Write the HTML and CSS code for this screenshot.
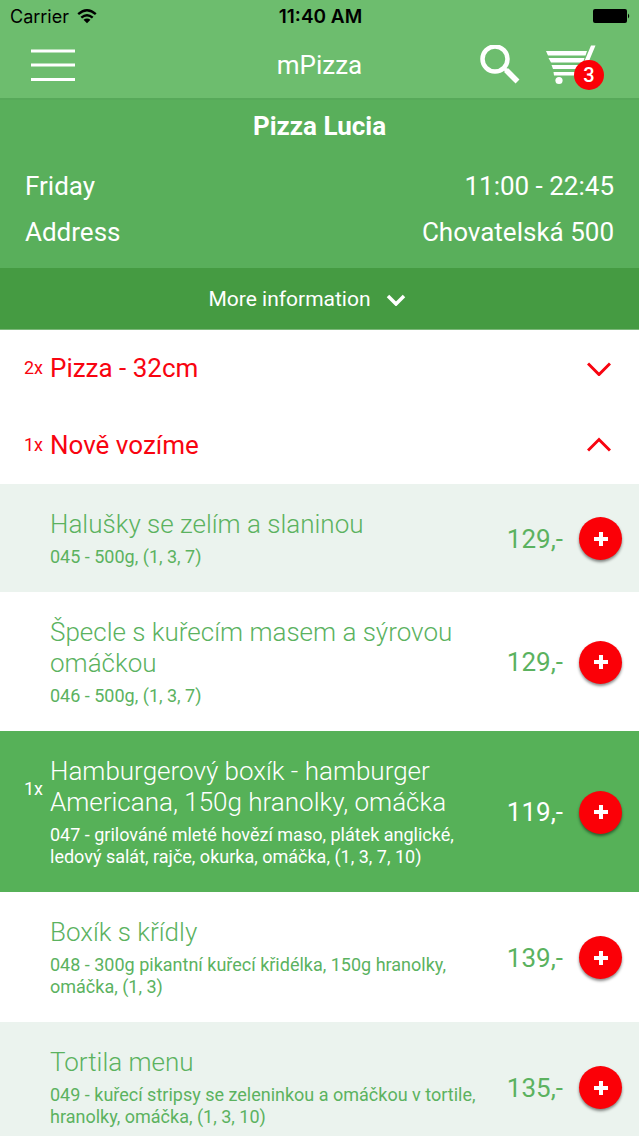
FILE: index.html
```html
<!DOCTYPE html>
<html lang="cs">
<head>
<meta charset="utf-8">
<meta name="viewport" content="width=device-width, initial-scale=1">
<title>mPizza</title>
<link rel="stylesheet" href="styles.css">
</head>
<body>
<div class="app">
  <header class="topbar">
    <div class="status">
      <span class="carrier">Carrier
        <svg width="20" height="15" viewBox="0 0 20 15" fill="none" stroke="#000" stroke-width="2.4" aria-hidden="true"><path d="M1.2 5.2Q10-2.6 18.8 5.2M4.3 8.7Q10 3.7 15.7 8.7"/><path d="M6.5 10.8Q10 8 13.5 10.8L10 14.3Z" fill="#000" stroke="none"/></svg>
      </span>
      <span class="clock">11:40 AM</span>
      <svg class="battery" width="38" height="16" viewBox="0 0 38 16" aria-hidden="true"><rect x="0" y="1" width="34" height="14" rx="2"/><path d="M35 5.500q2.500 2.500 0 5z"/></svg>
    </div>
    <nav class="nav">
      <button class="icon-button" aria-label="Menu">
        <svg width="44" height="34" viewBox="0 0 44 34" stroke="#fff" stroke-width="3"><path d="M0 3h44M0 17h44M0 31.500h44"/></svg>
      </button>
      <h1 class="app-title">mPizza</h1>
      <div class="actions">
        <button class="icon-button" aria-label="Search">
          <svg width="40" height="40" viewBox="0 0 40 40" fill="none" stroke="#fff"><circle cx="15" cy="14" r="12.500" stroke-width="4.500"/><path d="M24 23l2.500 2.500" stroke-width="3.500"/><path d="M26 25L37.500 36.500" stroke-width="5.500"/></svg>
        </button>
        <button class="icon-button cart" aria-label="Cart">
          <svg width="51" height="40" viewBox="0 0 51 40" fill="#fff"><path d="M0 6h41l-1.500 4.500H2zM2.500 13h36l-1.500 4.500H5zM5.500 20h31L35 24H7zM7.500 27h27v3.500H8zM45 .5h4.500L40.500 22h-4.500z"/><circle cx="13" cy="35.500" r="3.600"/></svg>
          <span class="badge">3</span>
        </button>
      </div>
    </nav>
  </header>

  <section class="restaurant">
    <h2 class="restaurant-name">Pizza Lucia</h2>
    <dl class="facts">
      <div class="fact"><dt>Friday</dt><dd>11:00 - 22:45</dd></div>
      <div class="fact"><dt>Address</dt><dd>Chovatelská 500</dd></div>
    </dl>
  </section>
  <button class="more">More information
    <svg width="20" height="14" viewBox="0 0 20 14" fill="none" stroke="#fff" stroke-width="3.500" aria-hidden="true"><path d="M2 4l8 8 8-8"/></svg>
  </button>

  <main class="menu">
    <button class="category" aria-expanded="false">
      <span class="count">2x</span><span class="category-name">Pizza - 32cm</span>
      <svg width="24" height="16" viewBox="0 0 24 16" fill="none" stroke="#f80410" stroke-width="3" aria-hidden="true"><path d="M1 3.500l11 11 11-11"/></svg>
    </button>
    <button class="category" aria-expanded="true">
      <span class="count">1x</span><span class="category-name">Nově vozíme</span>
      <svg width="24" height="16" viewBox="0 0 24 16" fill="none" stroke="#f80410" stroke-width="3" aria-hidden="true"><path d="M1 13.500l11-11 11 11"/></svg>
    </button>
    <ul class="dishes">
      <li class="dish">
        <span class="count"></span>
        <div class="text"><h3 class="dish-name">Halušky se zelím a slaninou</h3><p class="detail">045 - 500g, (1, 3, 7)</p></div>
        <span class="price">129,-</span>
        <button class="add" aria-label="Add Halušky se zelím a slaninou"><svg width="14" height="14" viewBox="0 0 14 14" stroke="#fff" stroke-width="4"><path d="M7 0v14M0 7h14"/></svg></button>
      </li>
      <li class="dish">
        <span class="count"></span>
        <div class="text"><h3 class="dish-name">Špecle s kuřecím masem a sýrovou omáčkou</h3><p class="detail">046 - 500g, (1, 3, 7)</p></div>
        <span class="price">129,-</span>
        <button class="add" aria-label="Add Špecle s kuřecím masem"><svg width="14" height="14" viewBox="0 0 14 14" stroke="#fff" stroke-width="4"><path d="M7 0v14M0 7h14"/></svg></button>
      </li>
      <li class="dish selected">
        <span class="count">1x</span>
        <div class="text"><h3 class="dish-name">Hamburgerový boxík - hamburger Americana, 150g hranolky, omáčka</h3><p class="detail">047 - grilováné mleté hovězí maso, plátek anglické, ledový salát, rajče, okurka, omáčka, (1, 3, 7, 10)</p></div>
        <span class="price">119,-</span>
        <button class="add" aria-label="Add Hamburgerový boxík"><svg width="14" height="14" viewBox="0 0 14 14" stroke="#fff" stroke-width="4"><path d="M7 0v14M0 7h14"/></svg></button>
      </li>
      <li class="dish">
        <span class="count"></span>
        <div class="text"><h3 class="dish-name">Boxík s křídly</h3><p class="detail">048 - 300g pikantní kuřecí křidélka, 150g hranolky, omáčka, (1, 3)</p></div>
        <span class="price">139,-</span>
        <button class="add" aria-label="Add Boxík s křídly"><svg width="14" height="14" viewBox="0 0 14 14" stroke="#fff" stroke-width="4"><path d="M7 0v14M0 7h14"/></svg></button>
      </li>
      <li class="dish">
        <span class="count"></span>
        <div class="text"><h3 class="dish-name">Tortila menu</h3><p class="detail">049 - kuřecí stripsy se zeleninkou a omáčkou v tortile, hranolky, omáčka, (1, 3, 10)</p></div>
        <span class="price">135,-</span>
        <button class="add" aria-label="Add Tortila menu"><svg width="14" height="14" viewBox="0 0 14 14" stroke="#fff" stroke-width="4"><path d="M7 0v14M0 7h14"/></svg></button>
      </li>
    </ul>
  </main>
</div>
</body>
</html>
```
FILE: styles.css
```css
* { box-sizing: border-box; }
body, h1, h2, h3, p, dl, dd, ul { margin: 0; padding: 0; }
body { font-family: Roboto, "Noto Sans", sans-serif; font-size: 26px; font-weight: 400; background: #fff; }
button { font: inherit; color: inherit; background: none; border: 0; padding: 0; cursor: pointer; }
svg { display: block; flex: none; }

.app { height: 100vh; display: flex; flex-direction: column; color: #fff; }
.topbar { background: #6dbd6e; border-bottom: 2px solid #57a95a; }
.status, .nav { display: grid; grid-template-columns: 1fr auto 1fr; align-items: center; }
.status { height: 32px; padding: 0 8px 0 10px; color: #000; font-family: Inter, sans-serif; font-size: 18px; }
.carrier { display: flex; align-items: center; gap: 8px; }
.clock { font-size: 19px; font-weight: 600; }
.battery { justify-self: end; }
.nav { height: 66px; padding: 0 31px; }
.nav > .icon-button { justify-self: start; }
.app-title { font-size: 26px; font-weight: 400; }
.actions { display: flex; justify-content: flex-end; align-items: center; gap: 26px; padding-right: 11px; }
.cart { position: relative; }
.badge { position: absolute; right: -7px; bottom: -5px; width: 30px; height: 30px; border-radius: 50%; background: #fb0007; font-size: 20px; font-weight: 500; line-height: 30px; text-align: center; }

.restaurant { background: #59af5b; padding: 8px 25px 13px; }
.restaurant-name { font-size: 26px; font-weight: 700; line-height: 36px; text-align: center; margin-bottom: 19px; }
.fact { display: flex; justify-content: space-between; line-height: 46px; }
.more { flex: none; display: flex; align-items: center; justify-content: center; gap: 15px; height: 62px; padding-right: 25px; background: #459b42; font-size: 21px; border-bottom: 1px solid #7db87b; }

.menu { flex: 1; min-height: 0; overflow-y: auto; scrollbar-width: none; }
.category { display: flex; align-items: center; width: 100%; height: 77px; padding: 0 28px 2px 24px; color: #f80410; text-align: left; }
.category-name { flex: 1; }
.count { flex: none; width: 26px; font-size: 18px; }
.dishes { list-style: none; }
.dish { display: flex; align-items: center; padding: 25px 17px 24px 24px; color: #5bb25f; }
.dish:nth-child(odd) { background: #ebf3ee; }
.dish.selected { background: #56b158; color: #fff; }
.dish .count { margin-bottom: 48px; }
.text { flex: 1; min-width: 0; }
.dish-name { font-size: 26px; font-weight: 300; line-height: 31px; margin-bottom: 6px; padding-right: 24px; }
.detail { font-size: 18px; line-height: 22px; }
.price { flex: none; margin: 0 16px 0 8px; }
.add { flex: none; display: grid; place-items: center; width: 43px; height: 43px; border-radius: 50%; background: #fb0007; box-shadow: 0 2px 3px #0007; }
```
